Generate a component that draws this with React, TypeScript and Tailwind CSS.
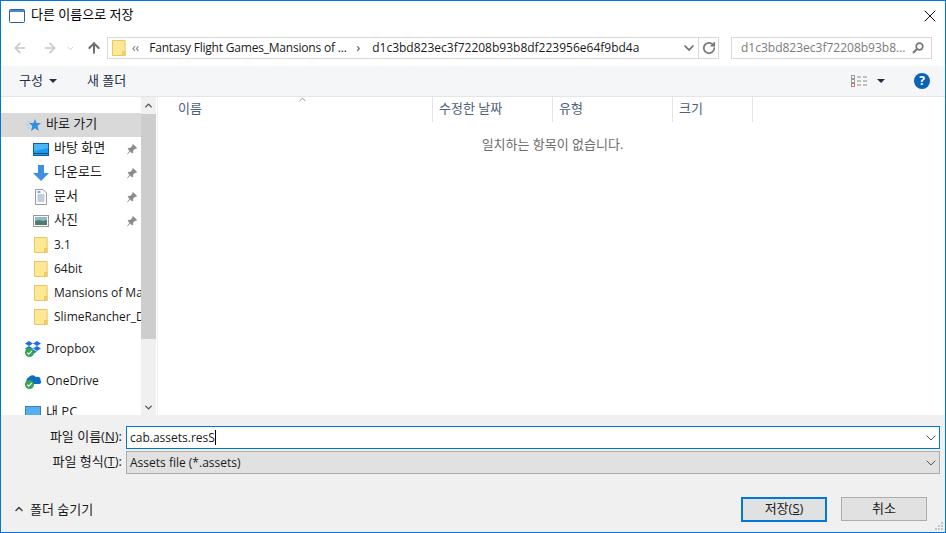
import React from 'react';
import { ArrowLeft, ArrowRight, ArrowUp, ChevronDown, ChevronUp, RotateCw, X } from 'lucide-react';

const FONT = "font-['Open_Sans','Noto_Sans_CJK_KR',sans-serif]";

const FolderIcon = () => (
  <svg width="14" height="16" viewBox="0 0 14 16" className="shrink-0">
    <path d="M.5.5h12.600v15H.5z" fill="#ffe893" stroke="#e9c662" />
    <path d="M10.500 15.500v-4h2.600v4z" fill="#f6d571" stroke="#e9c662" />
  </svg>
);

const DesktopIcon = () => (
  <svg width="16" height="13" viewBox="0 0 16 13">
    <rect x=".5" y=".5" width="15" height="12" fill="#1e9bf0" stroke="#0f5f9e" />
    <path d="M1 10.500h14" stroke="#0b4f86" />
    <path d="M1 1h14v4L1 8z" fill="#4db5f5" />
  </svg>
);

const DownloadIcon = () => (
  <svg width="16" height="16" viewBox="0 0 16 16">
    <path d="M5 0h6v8h5l-8 8-8-8h5z" fill="#3d8fe0" />
  </svg>
);

const DocIcon = () => (
  <svg width="12" height="16" viewBox="0 0 12 16">
    <path d="M.5.5h7.500l3.500 3.500v11.500H.5z" fill="#fff" stroke="#9a9a9a" />
    <path d="M2.500 6h7M2.500 8h7M2.500 10h7M2.500 12h7" stroke="#7f9cb8" />
    <path d="M2.500 3h3" stroke="#3d8fe0" strokeWidth="1.500" />
  </svg>
);

const PictureIcon = () => (
  <svg width="16" height="12" viewBox="0 0 16 12">
    <rect x=".5" y=".5" width="15" height="11" fill="#fff" stroke="#999" />
    <rect x="2" y="2" width="12" height="4" fill="#8fb8d0" />
    <path d="M2 6l4-1 4 1 4-1v5H2z" fill="#4f7f6a" />
  </svg>
);

const PinIcon = () => (
  <svg width="10" height="11" viewBox="0 0 10 11" className="shrink-0">
    <path d="M6 0l4 4-1 1-1-.3L6 7l.2 1.600-1 1L3.200 7.500 1 10 0 10.800 .5 9.500 2.500 6.800 .6 4.800l1-1L3.200 4l2.300-2.200L5.200.800z" fill="#8c8c8c" />
  </svg>
);

const StarIcon = () => (
  <svg width="15" height="14" viewBox="0 0 15 14">
    <path d="M9 1l1.500 4H15l-3.500 3 1.300 5L9 10.300 5 13l1.300-5L3 5h4.500z" fill="#2f8fe0" />
    <path d="M1 4h4M0 7h3M1 10h3" stroke="#9cc8ee" />
  </svg>
);

const SearchIcon = () => (
  <svg width="12" height="12" viewBox="0 0 12 12" className="shrink-0">
    <circle cx="7.500" cy="4.500" r="3.300" fill="none" stroke="#777" strokeWidth="1.700" />
    <path d="M5 7L1 11" stroke="#777" strokeWidth="2.200" />
  </svg>
);

const SyncCheck = () => (
  <svg width="9" height="9" viewBox="0 0 9 9" className="absolute bottom-0 left-0">
    <circle cx="4.500" cy="4.500" r="4.500" fill="#2fa84f" />
    <path d="M2.200 4.600l1.600 1.600 3-3.200" stroke="#fff" strokeWidth="1.200" fill="none" />
  </svg>
);

const DropboxIcon = () => (
  <span className="relative block w-[16px] h-[16px]">
    <svg width="16" height="13" viewBox="0 0 16 13" className="absolute right-0 top-0">
      <path d="M4 0l4 2.500L4 5 0 2.500zM12 0l4 2.500L12 5 8 2.500zM4 5l4 2.500L4 10 0 7.500zM12 5l4 2.500L12 10 8 7.500zM4 10.800l4-2.300 4 2.300-4 2.200z" fill="#1f6fe0" />
    </svg>
    <SyncCheck />
  </span>
);

const OneDriveIcon = () => (
  <span className="relative block w-[16px] h-[16px]">
    <svg width="16" height="10" viewBox="0 0 16 10" className="absolute right-0 top-[1px]">
      <path d="M3 9a3 3 0 0 1 .5-5.500A4.500 4.500 0 0 1 11 3a3.200 3.200 0 0 1 4.500 3.500A2 2 0 0 1 14 10H4z" fill="#0f6cc4" />
    </svg>
    <SyncCheck />
  </span>
);

const PcIcon = () => (
  <svg width="16" height="14" viewBox="0 0 16 14">
    <rect x=".5" y=".5" width="15" height="13" fill="#55aef0" stroke="#3c7fb5" />
  </svg>
);

const ViewIcon = () => (
  <svg width="16" height="13" viewBox="0 0 16 13">
    <rect x=".5" y=".5" width="3" height="3" fill="#fff" stroke="#9a9a9a" />
    <rect x=".5" y="4.500" width="3" height="3" fill="#fff" stroke="#9a9a9a" />
    <rect x=".5" y="8.500" width="3" height="3" fill="#fff" stroke="#c77" />
    <path d="M6 2h4M12 2h4M6 6h4M12 6h4M6 10h4M12 10h4" stroke="#8a8a8a" />
  </svg>
);

function NavRow({
  icon,
  label,
  pinned,
  indent = true,
  ko,
}: {
  icon: React.ReactNode;
  label: string;
  pinned?: boolean;
  indent?: boolean;
  ko?: boolean;
}) {
  return (
    <div className={`flex items-center shrink-0 h-[24px] ${indent ? 'pl-[32px]' : 'pl-[24px]'}`}>
      <span className="flex items-center justify-center shrink-0 w-[16px] mr-[5px]">{icon}</span>
      <span className={`whitespace-nowrap text-[#1a1a1a] min-w-0 ${ko ? 'text-[13px] pb-[2px]' : ''}`}>{label}</span>
      {pinned && (
        <span className="ml-auto mr-[4px]">
          <PinIcon />
        </span>
      )}
    </div>
  );
}

function HeaderCell({ label, width }: { label: string; width: string }) {
  return (
    <div className={`flex items-center h-full pl-[6px] pb-[2px] border-r border-[#e5e5e5] text-[13px] text-[#4c607a] ${width}`}>{label}</div>
  );
}

export default function App() {
  return (
    <div className={`${FONT} flex flex-col w-[946px] h-[533px] overflow-hidden bg-white border border-[#0078d7] text-[12px] text-[#1a1a1a]`}>
      {/* title bar */}
      <div className="flex items-center h-[29px] shrink-0 pl-[8px] pr-[5px]">
        <svg width="16" height="14" viewBox="0 0 16 14" className="shrink-0">
          <rect x=".5" y=".5" width="15" height="13" rx="1" fill="#fff" stroke="#2b5ea8" />
          <rect x="1" y="1" width="14" height="2" fill="#4b86cf" />
        </svg>
        <span className="ml-[6px] pb-[2px] text-[#000] text-[13px]">다른 이름으로 저장</span>
        <X className="ml-auto w-[20px] h-[20px] text-[#111]" strokeWidth={1.200} />
      </div>

      {/* address row */}
      <div className="flex items-center h-[36px] shrink-0">
        <div className="flex items-center w-[106px] shrink-0 pl-[11px] text-[#c8c8c8]">
          <ArrowLeft className="w-[16px] h-[16px]" strokeWidth={2.500} />
          <ArrowRight className="ml-[14px] w-[16px] h-[16px]" strokeWidth={2.500} />
          <ChevronDown className="ml-[8px] w-[9px] h-[9px]" strokeWidth={2.500} />
          <ArrowUp className="ml-[11px] w-[16px] h-[16px] text-[#6d6d6d]" strokeWidth={3} />
        </div>
        <div className="flex items-center w-[612px] h-[22px] border border-[#d9d9d9] shrink-0">
          <span className="ml-[4px]">
            <FolderIcon />
          </span>
          <span className="ml-[6px] text-[#6d6d6d]">‹‹</span>
          <span className="ml-[10px] whitespace-nowrap tracking-[-0.2px]">Fantasy Flight Games_Mansions of ...</span>
          <span className="ml-[10px] text-[#333]">›</span>
          <span className="ml-[12px] whitespace-nowrap">d1c3bd823ec3f72208b93b8df223956e64f9bd4a</span>
          <ChevronDown className="ml-auto mr-[1px] w-[16px] h-[16px] text-[#666]" strokeWidth={2.500} />
          <div className="flex items-center justify-center w-[20px] h-full border-l border-[#d9d9d9]">
            <RotateCw className="w-[14px] h-[14px] text-[#777]" strokeWidth={3} />
          </div>
        </div>
        <div className="flex items-center w-[201px] h-[22px] ml-[12px] pl-[9px] pr-[7px] border border-[#d9d9d9] shrink-0 text-[#7a7a7a]">
          <span className="whitespace-nowrap">d1c3bd823ec3f72208b93b8...</span>
          <span className="ml-auto">
            <SearchIcon />
          </span>
        </div>
      </div>

      {/* toolbar */}
      <div className="flex items-center h-[31px] shrink-0 bg-[#f5f6f7] border-b border-[#e5e5e5]">
        <span className="ml-[18px] text-[13px] text-[#1f2f4a]">구성</span>
        <span className="ml-[6px] w-0 h-0 border-x-[4px] border-x-transparent border-t-[4px] border-t-[#1f2f4a]" />
        <span className="ml-[30px] text-[13px] text-[#1f2f4a]">새 폴더</span>
        <span className="ml-auto">
          <ViewIcon />
        </span>
        <span className="ml-[10px] w-0 h-0 border-x-[4px] border-x-transparent border-t-[4px] border-t-[#1f2f4a]" />
        <span className="flex items-center justify-center ml-[29px] mr-[15px] w-[16px] h-[16px] rounded-full bg-[#0b62b8] text-white font-bold text-[12px] leading-none">
          ?
        </span>
      </div>

      {/* main */}
      <div className="flex flex-1 min-h-0">
        <div className="flex flex-col w-[140px] shrink-0 overflow-hidden pt-[16px]">
          <div className="flex items-center h-[24px] shrink-0 bg-[#d9d9d9] pl-[25px]">
            <StarIcon />
            <span className="ml-[5px] pb-[2px] text-[13px]">바로 가기</span>
          </div>
          <NavRow icon={<DesktopIcon />} label="바탕 화면" pinned ko />
          <NavRow icon={<DownloadIcon />} label="다운로드" pinned ko />
          <NavRow icon={<DocIcon />} label="문서" pinned ko />
          <NavRow icon={<PictureIcon />} label="사진" pinned ko />
          <NavRow icon={<FolderIcon />} label="3.1" />
          <NavRow icon={<FolderIcon />} label="64bit" />
          <NavRow icon={<FolderIcon />} label="Mansions of Madness" />
          <NavRow icon={<FolderIcon />} label="SlimeRancher_Data" />
          <div className="h-[8px] shrink-0" />
          <NavRow icon={<DropboxIcon />} label="Dropbox" indent={false} />
          <div className="h-[8px] shrink-0" />
          <NavRow icon={<OneDriveIcon />} label="OneDrive" indent={false} />
          <div className="h-[8px] shrink-0" />
          <NavRow icon={<PcIcon />} label="내 PC" indent={false} ko />
        </div>

        {/* scrollbar */}
        <div className="flex flex-col w-[15px] shrink-0 bg-[#f0f0f0]">
          <div className="flex items-center justify-center h-[17px] shrink-0">
            <ChevronUp className="w-[11px] h-[11px] text-[#505050]" strokeWidth={3} />
          </div>
          <div className="h-[225px] shrink-0 bg-[#cdcdcd]" />
          <div className="flex flex-1 items-end justify-center pb-[2px]">
            <ChevronDown className="w-[11px] h-[11px] text-[#505050]" strokeWidth={3} />
          </div>
        </div>
        <div className="w-[2px] shrink-0 border-r border-[#f0f0f0] mr-[1px]" />

        {/* list */}
        <div className="relative flex-1 min-w-0 flex flex-col">
          <div className="flex items-center h-[25px] shrink-0 pl-[13px]">
            <HeaderCell label="이름" width="w-[261px]" />
            <HeaderCell label="수정한 날짜" width="w-[120px]" />
            <HeaderCell label="유형" width="w-[120px]" />
            <HeaderCell label="크기" width="w-[80px]" />
          </div>
          <ChevronUp className="absolute left-[138px] top-[-3px] w-[11px] h-[11px] text-[#666]" strokeWidth={1.500} />
          <div className="mt-[13px] w-[787px] text-center text-[13px] text-[#6d6d6d]">일치하는 항목이 없습니다.</div>
        </div>
      </div>

      {/* bottom panel */}
      <div className="flex flex-col h-[117px] shrink-0 bg-[#f0f0f0] pt-[11px] relative">
        <div className="flex items-center h-[23px] shrink-0">
          <div className="w-[121px] pb-[2px] text-right text-[13px] text-[#1a1a1a]">
            파일 이름(<span className="underline">N</span>):
          </div>
          <div className="flex items-center ml-[4px] w-[814px] h-[23px] pl-[3px] bg-white border border-[#0078d7]">
            <span>cab.assets.resS</span>
            <span className="w-px h-[15px] bg-black" />
            <ChevronDown className="ml-auto w-[16px] h-[16px] text-[#555]" strokeWidth={1.500} />
          </div>
        </div>
        <div className="flex items-center h-[23px] shrink-0 mt-[2px]">
          <div className="w-[121px] pb-[2px] text-right text-[13px] text-[#1a1a1a]">
            파일 형식(<span className="underline">T</span>):
          </div>
          <div className="flex items-center ml-[4px] w-[814px] h-[23px] pl-[3px] bg-[#e1e1e1] border border-[#adadad]">
            <span>Assets file (*.assets)</span>
            <ChevronDown className="ml-auto w-[16px] h-[16px] text-[#555]" strokeWidth={1.500} />
          </div>
        </div>
        <div className="flex items-center mt-[22px] h-[26px] shrink-0">
          <ChevronUp className="ml-[12px] w-[12px] h-[12px] text-[#444]" strokeWidth={3} />
          <span className="ml-[5px] pt-[2px] text-[13px]">폴더 숨기기</span>
          <button className="ml-auto flex items-center justify-center w-[86px] h-[25px] text-[13px] bg-[#e1e1e1] border-2 border-[#0078d7]">
            저장(<span className="underline">S</span>)
          </button>
          <button className="ml-[14px] mr-[18px] flex items-center justify-center w-[86px] h-[24px] text-[13px] bg-[#e1e1e1] border border-[#adadad]">
            취소
          </button>
        </div>
        <svg width="10" height="10" viewBox="0 0 10 10" className="absolute right-[1px] bottom-[1px]">
          <path d="M7 1h2v2H7zM4 4h2v2H4zM7 4h2v2H7zM1 7h2v2H1zM4 7h2v2H4zM7 7h2v2H7z" fill="#c4c4c4" />
        </svg>
      </div>
    </div>
  );
}
